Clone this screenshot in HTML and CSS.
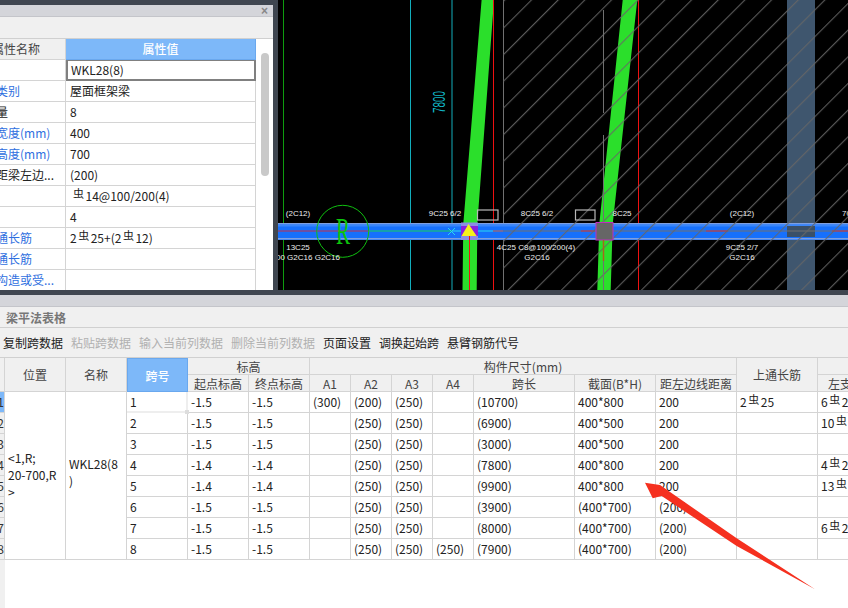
FILE: index.html
```html
<!DOCTYPE html>
<html lang="zh">
<head>
<meta charset="utf-8">
<title>梁平法表格</title>
<link rel="stylesheet" href="styles.css">
</head>
<body>
<div class="top">
  <section class="props">
    <div class="props-title"><span class="close">×</span></div>
    <div class="props-tools"></div>
    <div class="props-body">
      <table class="props-table">
        <colgroup><col class="pc1"><col class="pc2"></colgroup>
        <tr><th class="pl-head">属性名称</th><th class="sel">属性值</th></tr>
        <tr><td class="pl"></td><td class="editing">WKL28(8)</td></tr>
        <tr><td class="pl link">结构类别</td><td>屋面框架梁</td></tr>
        <tr><td class="pl">跨数量</td><td>8</td></tr>
        <tr><td class="pl link">截面宽度(mm)</td><td>400</td></tr>
        <tr><td class="pl link">截面高度(mm)</td><td>700</td></tr>
        <tr><td class="pl">轴线距梁左边...</td><td>(200)</td></tr>
        <tr><td class="pl"></td><td><span class="rb first">虫</span>14@100/200(4)</td></tr>
        <tr><td class="pl"></td><td>4</td></tr>
        <tr><td class="pl link">上部通长筋</td><td>2<span class="rb">虫</span>25+(2<span class="rb">虫</span>12)</td></tr>
        <tr><td class="pl link">下部通长筋</td><td></td></tr>
        <tr><td class="pl link">侧面构造或受...</td><td></td></tr>
      </table>
      <div class="scroll"><div class="thumb"></div></div>
    </div>
  </section>
  <div class="canvas">
    <svg class="cad" viewBox="278 0 570 290" width="570" height="290" xmlns="http://www.w3.org/2000/svg">
      <defs>
        <pattern id="hatch" width="18.86" height="20" patternUnits="userSpaceOnUse" patternTransform="rotate(45)">
          <line class="hatch-line" x1="17.5" y1="0" x2="17.5" y2="20"/>
        </pattern>
      </defs>
      <line class="ln-green" x1="283.5" y1="0" x2="283.5" y2="290"/>
      <line class="ln-cyan" x1="410.5" y1="0" x2="410.5" y2="290"/>
      <line class="ln-cyan" x1="452" y1="0" x2="452" y2="290"/>
      <polygon class="col-green" points="481.6,0 494,0 477.3,224 476.7,290 462.5,290 463.3,224"/>
      <polygon class="col-green" points="622.7,0 637.3,0 612.7,224 610.7,290 597.3,290 599.3,224"/>
      <rect class="column" x="787" y="0" width="28" height="290"/>
      <line class="ln-red" x1="493.5" y1="0" x2="493.5" y2="290"/>
      <line class="ln-red" x1="638.5" y1="0" x2="638.5" y2="290"/>
      <line class="ln-gray" x1="503.5" y1="0" x2="503.5" y2="290"/>
      <rect class="beam" x="278" y="223" width="570" height="17"/>
      <rect class="beam-edge" x="278" y="223" width="570" height="1.5"/>
      <rect class="beam-edge" x="278" y="238" width="570" height="1.5"/>
      <rect class="beam-light" x="278" y="224.5" width="570" height="2"/>
      <rect class="column-beam" x="787" y="226" width="28" height="11"/>
      <line class="ln-red-thin" x1="278" y1="231" x2="369" y2="231"/>
      <line class="ln-green-thin" x1="369" y1="231" x2="452" y2="231"/>
      <line class="ln-cyan-bright" x1="452" y1="231" x2="503" y2="231"/>
      <line class="ln-gray" x1="503" y1="231" x2="848" y2="231"/>
      <line class="ln-red-thin" x1="581" y1="231" x2="595" y2="231"/>
      <line class="ln-red-thin" x1="706" y1="231" x2="728" y2="231"/>
      <line class="ln-red-thin" x1="832" y1="231" x2="848" y2="231"/>
      <line class="ln-red-thin" x1="493" y1="231" x2="503" y2="231"/>
      <rect class="hatch" x="503" y="0" width="345" height="290" fill="url(#hatch)"/>
      <line class="ln-gray" x1="603.5" y1="10" x2="603.5" y2="113"/>
      <line class="ln-gray" x1="603.5" y1="135" x2="603.5" y2="290"/>
      <circle class="axis" cx="342.7" cy="231.3" r="26"/>
      <text class="axis-label" x="336" y="244" textLength="14" lengthAdjust="spacingAndGlyphs">R</text>
      <line class="ln-cyan-bright" x1="448" y1="228" x2="455" y2="235"/>
      <line class="ln-cyan-bright" x1="448" y1="235" x2="455" y2="228"/>
      <rect class="node-bg" x="461" y="222.5" width="17" height="17.5"/>
      <rect class="node-fill" x="461" y="226" width="17" height="10"/>
      <polygon class="node-tri" points="468.5,224 476.7,236 461.5,236"/>
      <line class="ln-red" x1="469.5" y1="236" x2="469.5" y2="290"/>
      <rect class="support" x="596" y="222.5" width="17" height="17.5"/>
      <line class="ln-brown" x1="603.5" y1="240" x2="603.5" y2="261"/>
      <rect class="tag" x="477.5" y="210" width="20.5" height="10"/>
      <rect class="tag" x="575.5" y="210" width="19.5" height="10"/>
      <text class="cad-text" x="298" y="216" text-anchor="middle">(2C12)</text>
      <text class="cad-text" x="298" y="250" text-anchor="middle">13C25</text>
      <text class="cad-text" x="308" y="260" text-anchor="middle">00 G2C16 G2C16</text>
      <text class="cad-text" x="445" y="216" text-anchor="middle">9C25 6/2</text>
      <text class="cad-text" x="537" y="216" text-anchor="middle">8C25 6/2</text>
      <text class="cad-text" x="536" y="250" text-anchor="middle">4C25 C8@100/200(4)</text>
      <text class="cad-text" x="537" y="260" text-anchor="middle">G2C16</text>
      <text class="cad-text" x="622" y="216" text-anchor="middle">8C25</text>
      <text class="cad-text" x="742" y="216" text-anchor="middle">(2C12)</text>
      <text class="cad-text" x="742" y="250" text-anchor="middle">9C25 2/7</text>
      <text class="cad-text" x="742" y="260" text-anchor="middle">G2C16</text>
      <text class="cad-text" x="842" y="216">70</text>
      <text class="dim" x="0" y="0" transform="translate(445 113) rotate(-90)" textLength="22" lengthAdjust="spacingAndGlyphs">7800</text>
    </svg>
  </div>
</div>
<div class="band"></div>
<section class="sheet">
  <div class="sheet-strip"></div>
  <div class="sheet-title">梁平法表格</div>
  <div class="toolbar">
    <span>复制跨数据</span>
    <span class="off">粘贴跨数据</span>
    <span class="off">输入当前列数据</span>
    <span class="off">删除当前列数据</span>
    <span>页面设置</span>
    <span>调换起始跨</span>
    <span>悬臂钢筋代号</span>
  </div>
  <div class="grid-wrap">
    <div class="rowhead">
      <div class="rh-top"></div>
      <div class="rh on">1</div><div class="rh">2</div><div class="rh">3</div><div class="rh">4</div>
      <div class="rh">5</div><div class="rh">6</div><div class="rh">7</div><div class="rh">8</div>
    </div>
    <table class="grid">
      <colgroup>
        <col class="c61"><col class="c61"><col class="c61"><col class="c61"><col class="c61">
        <col class="c41"><col class="c41"><col class="c41"><col class="c41">
        <col class="c101"><col class="c81"><col class="c81"><col class="c81"><col class="c81">
      </colgroup>
      <tr class="hr">
        <th rowspan="2">位置</th><th rowspan="2">名称</th><th rowspan="2" class="sel">跨号</th>
        <th colspan="2">标高</th><th colspan="7">构件尺寸(mm)</th><th rowspan="2">上通长筋</th><th></th>
      </tr>
      <tr class="hr">
        <th>起点标高</th><th>终点标高</th><th>A1</th><th>A2</th><th>A3</th><th>A4</th><th>跨长</th><th>截面(B*H)</th><th>距左边线距离</th><th>左支座钢筋</th>
      </tr>
      <tr><td rowspan="8" class="pos">&lt;1,R;<br>20-700,R<br>&gt;</td><td rowspan="8" class="name">WKL28(8<br>)</td><td class="active">1<i class="handle"></i></td><td>-1.5</td><td>-1.5</td><td>(300)</td><td>(200)</td><td>(250)</td><td></td><td>(10700)</td><td>400*800</td><td>200</td><td>2<span class="rb">虫</span>25</td><td>6<span class="rb">虫</span>25</td></tr>
      <tr><td>2</td><td>-1.5</td><td>-1.5</td><td></td><td>(250)</td><td>(250)</td><td></td><td>(6900)</td><td>400*500</td><td>200</td><td></td><td>10<span class="rb">虫</span>25</td></tr>
      <tr><td>3</td><td>-1.5</td><td>-1.5</td><td></td><td>(250)</td><td>(250)</td><td></td><td>(3000)</td><td>400*500</td><td>200</td><td></td><td></td></tr>
      <tr><td>4</td><td>-1.4</td><td>-1.4</td><td></td><td>(250)</td><td>(250)</td><td></td><td>(7800)</td><td>400*800</td><td>200</td><td></td><td>4<span class="rb">虫</span>25</td></tr>
      <tr><td>5</td><td>-1.4</td><td>-1.4</td><td></td><td>(250)</td><td>(250)</td><td></td><td>(9900)</td><td>400*800</td><td>200</td><td></td><td>13<span class="rb">虫</span>25</td></tr>
      <tr><td>6</td><td>-1.5</td><td>-1.5</td><td></td><td>(250)</td><td>(250)</td><td></td><td>(3900)</td><td>(400*700)</td><td>(200)</td><td></td><td></td></tr>
      <tr><td>7</td><td>-1.5</td><td>-1.5</td><td></td><td>(250)</td><td>(250)</td><td></td><td>(8000)</td><td>(400*700)</td><td>(200)</td><td></td><td>6<span class="rb">虫</span>25</td></tr>
      <tr><td>8</td><td>-1.5</td><td>-1.5</td><td></td><td>(250)</td><td>(250)</td><td>(250)</td><td>(7900)</td><td>(400*700)</td><td>(200)</td><td></td><td></td></tr>
    </table>
  </div>
  <svg class="arrow" viewBox="0 0 190 125" width="190" height="125" xmlns="http://www.w3.org/2000/svg">
    <polygon class="arrow-shape" points="15,12.7 30,15 106.7,68.3 185,119.3 106.7,76 31.7,26 22.7,28.3"/>
  </svg>
</section>
</body>
</html>
```
FILE: styles.css
```css
* { box-sizing: border-box; }
html, body { margin: 0; padding: 0; }
body {
  width: 848px;
  height: 608px;
  overflow: hidden;
  background: #fff;
  color: #222;
  font: 12px/16px "Noto Sans CJK SC", "Noto Sans", sans-serif;
}
.top {
  display: flex;
  height: 290px;
  background: #3f4650;
}
.props {
  width: 273px;
  margin-top: 5px;
  margin-right: 5px;
  display: flex;
  flex-direction: column;
  background: #fff;
  overflow: hidden;
}
.props-title {
  height: 12px;
  background: #d4d5da;
  border-bottom: 1px solid #c4c5ca;
  display: flex;
  justify-content: flex-end;
  padding-right: 5px;
}
.close { color: #888; font: 700 12px/12px "Liberation Sans", sans-serif; }
.props-tools {
  height: 22px;
  background: #f0f0f0;
  border-bottom: 1px solid #d0d0d0;
}
.props-body { display: flex; flex: 1; min-height: 0; overflow: hidden; }
.props-table {
  width: 256px;
  height: 252px;
  flex: none;
  table-layout: fixed;
  border-collapse: separate;
  border-spacing: 0;
}
.pc1 { width: 66px; }
.pc2 { width: 190px; }
.props-table th, .props-table td {
  height: 21px;
  padding: 0 0 0 4px;
  border-right: 1px solid #d4d4d4;
  border-bottom: 1px solid #d4d4d4;
  white-space: nowrap;
  overflow: hidden;
  font-weight: 400;
  text-align: left;
}
.props-table th { background: #f0f0f0; color: #444; }
.props-table th.sel { background: #7db8f9; color: #fff; text-align: center; padding: 0; border-color: #6aa8ee; font-weight: 500; }
.props-table th.pl-head { text-indent: -8px; padding: 0; font-size: 12px; }
.props-table td.pl { padding: 0; text-indent: -28px; background: #fff; }
.link { color: #2f6fe0; }
.props-table td.editing { border: 2px solid #808080; border-top-width: 1px; padding-left: 3px; }
.scroll { width: 17px; flex: none; padding: 14px 4px 0 5px; background: #fff; }
.thumb { width: 8px; height: 123px; border-radius: 4px; background: #c9c9c9; }
.rb { font-size: 11px; line-height: 10px; vertical-align: 3px; margin: 0 1.5px; }
.rb.first { margin-left: 3px; }

.canvas { width: 570px; height: 290px; background: #000; overflow: hidden; }
.cad { display: block; }
.hatch-line { stroke: #666; stroke-width: 1; }
.ln-green { stroke: #0e9c0e; stroke-width: 1; }
.ln-cyan { stroke: #12aebc; stroke-width: 1; }
.ln-red { stroke: #ee1111; stroke-width: 1; }
.ln-gray { stroke: #707070; stroke-width: 1; }
.ln-red-thin { stroke: #c4304a; stroke-width: 1; }
.ln-green-thin { stroke: #16d05a; stroke-width: 1; }
.ln-cyan-bright { stroke: #28d8f0; stroke-width: 1; }
.ln-brown { stroke: #a8641e; stroke-width: 1.5; }
.col-green { fill: #2bdf2b; }
.column { fill: #3f566e; }
.column-beam { fill: #3a5068; }
.beam { fill: #1670fc; }
.beam-edge { fill: #7e9fe0; }
.beam-light { fill: #3a86fa; }
.axis { fill: none; stroke: #10c010; stroke-width: 1; }
.axis-label { fill: #0cc40c; font: 400 38px "Liberation Serif", serif; }
.node-bg { fill: #8c8ce4; }
.node-fill { fill: #8a1ee0; }
.node-tri { fill: #f6f21a; }
.support { fill: #666; stroke: #c02cc0; stroke-width: 1; }
.tag { fill: none; stroke: #b8b8b8; stroke-width: 1.2; }
.cad-text { fill: #eee; font: 400 8px "Liberation Sans", sans-serif; }
.dim { fill: #12b8c8; font: 400 16px "Liberation Sans", sans-serif; }

.band { height: 5px; background: #3f4650; }
.sheet { position: relative; height: 313px; background: #fff; }
.sheet-strip { height: 12px; background: #d4d5da; border-bottom: 1px solid #c4c5ca; }
.sheet-title {
  height: 21px;
  padding-left: 6px;
  line-height: 21px;
  background: #f0f0f0;
  border-bottom: 1px solid #d0d0d0;
  color: #777;
  font-weight: 700;
}
.toolbar {
  height: 30px;
  display: flex;
  align-items: center;
  gap: 8px;
  padding-left: 3px;
  background: #f0f0f0;
  border-bottom: 1px solid #d0d0d0;
}
.toolbar .off { color: #b0b0b0; }
.grid-wrap { display: flex; height: 250px; overflow: hidden; }
.rowhead { width: 5px; flex: none; background: #f0f0f0; height: 100%; }
.rh-top { height: 34px; width: 5px; border-right: 1px solid #d4d4d4; border-bottom: 1px solid #d4d4d4; }
.rh {
  width: 5px;
  height: 21px;
  display: flex;
  justify-content: flex-end;
  align-items: center;
  overflow: hidden;
  border-right: 1px solid #d4d4d4;
  border-bottom: 1px solid #d4d4d4;
  color: #333;
}
.rh.on { background: #7db8f9; }
.grid {
  width: 843px;
  min-width: 843px;
  flex: none;
  table-layout: fixed;
  border-collapse: separate;
  border-spacing: 0;
  align-self: flex-start;
}
.c61 { width: 61px; }
.c41 { width: 41px; }
.c101 { width: 101px; }
.c81 { width: 81px; }
.grid th, .grid td {
  padding: 0 0 0 3px;
  height: 21px;
  border-right: 1px solid #d4d4d4;
  border-bottom: 1px solid #d4d4d4;
  white-space: nowrap;
  overflow: hidden;
  font-weight: 400;
  text-align: left;
}
.grid .hr th {
  height: 17px;
  line-height: 15px;
  padding: 0;
  text-align: center;
  background: #f0f0f0;
  color: #444;
}
.grid .hr th.sel { background: #7db8f9; color: #fff; font-weight: 500; border: 1px solid #6aa8ee; }
.grid td.pos, .grid td.name { white-space: normal; line-height: 17px; vertical-align: middle; }
.grid td.pos { padding-left: 3px; padding-bottom: 2px; }
.grid td.name { padding-left: 3px; padding-bottom: 8px; }
.grid td.active { position: relative; border-right: 2px solid #eee; border-bottom: 2px solid #eee; overflow: visible; }
.handle { position: absolute; right: -3px; bottom: -3px; width: 4px; height: 4px; background: #ddd; }
.arrow { position: absolute; left: 630px; top: 175px; }
.arrow-shape { fill: #f5301f; }
```
